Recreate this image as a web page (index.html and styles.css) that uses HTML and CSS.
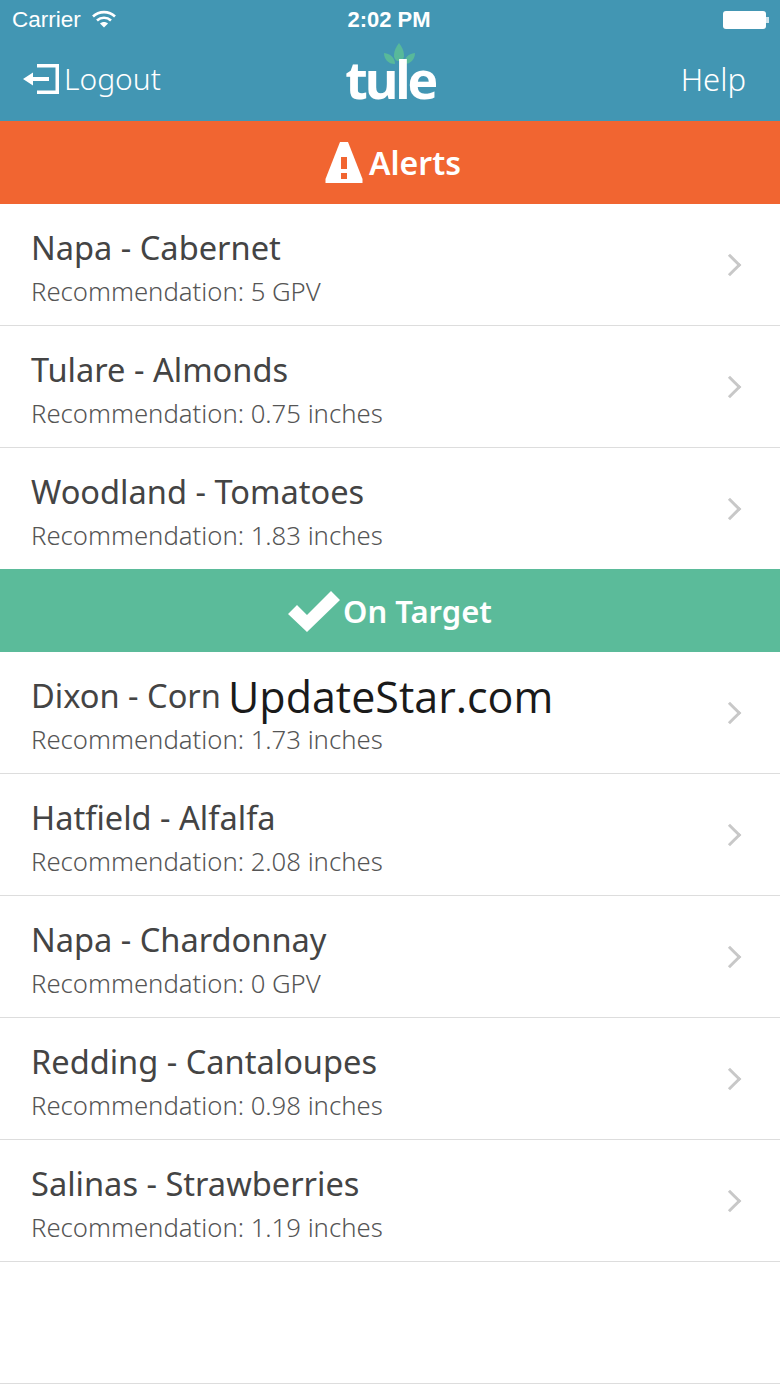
FILE: index.html
```html
<!DOCTYPE html>
<html>

<head>
    <meta charset="UTF-8">
    <title>Tule</title>
    <link rel="stylesheet" href="styles.css">
</head>

<body>
<div class="header">
    <div class="status">
        <div class="carrier">
            <span>Carrier</span>
            <svg class="wifi" width="24" height="18" viewBox="0 0 24 18">
                <path d="M1 6.500C7 0.600 17 0.600 23 6.500" fill="none" stroke="#fff" stroke-width="2.600"/>
                <path d="M5 10.500C9 6.800 15 6.800 19 10.500" fill="none" stroke="#fff" stroke-width="2.600"/>
                <path d="M8 13.600C10.400 11.600 13.600 11.600 16 13.600L12 17.600Z" fill="#fff"/>
            </svg>
        </div>
        <div class="clock">2:02 PM</div>
        <div class="battery"><i></i></div>
    </div>
    <div class="nav">
        <a class="nav-left">
            <svg width="36" height="30" viewBox="0 0 36 30">
                <path d="M14 0H36V30H14V26.500H32.500V3.500H14Z" fill="#fff"/>
                <path d="M0 15L10 8.500V13H26V17H10V21.500Z" fill="#fff"/>
            </svg>
            <span>Logout</span>
        </a>
        <div class="logo">
            <svg class="leaves" width="31" height="22" viewBox="0 0 31 22">
                <path d="M15 0C18 4 20 8 20 12C20 16 18 18 15 18C12 18 10 16 10 12C10 8 12 4 15 0Z" fill="#58b99a"/>
                <path d="M31 10C31 16 27 21 20 21C20 15 24 11 31 10Z" fill="#58b99a"/>
                <path d="M0 10C0 16 4 21 11 21C11 15 7 11 0 10Z" fill="#58b99a"/>
            </svg>
            <span>tule</span>
        </div>
        <a class="nav-right">Help</a>
    </div>
</div>

<div class="band band-alert">
    <svg width="38" height="42" viewBox="0 0 38 42">
        <path d="M15 0H23L37.500 37V41H0.500V37Z" fill="#fff"/>
        <rect x="16" y="15" width="6" height="12" fill="#f16531"/>
        <rect x="16" y="31" width="6" height="6" fill="#f16531"/>
    </svg>
    <span>Alerts</span>
</div>
<ul class="list">
    <li class="row"><div><h3>Napa - Cabernet</h3><p>Recommendation: 5 GPV</p></div><b class="chev"></b></li>
    <li class="row"><div><h3>Tulare - Almonds</h3><p>Recommendation: 0.75 inches</p></div><b class="chev"></b></li>
    <li class="row row-last"><div><h3>Woodland - Tomatoes</h3><p>Recommendation: 1.83 inches</p></div><b class="chev"></b></li>
</ul>

<div class="band band-ok">
    <svg width="52" height="42" viewBox="0 0 52 42">
        <path d="M0 24L9 15L19 25L43 1L52 10L19 42Z" fill="#fff"/>
    </svg>
    <span>On Target</span>
</div>
<ul class="list">
    <li class="row"><div><h3>Dixon - Corn</h3><p>Recommendation: 1.73 inches</p></div><span class="watermark">UpdateStar.com</span><b class="chev"></b></li>
    <li class="row"><div><h3>Hatfield - Alfalfa</h3><p>Recommendation: 2.08 inches</p></div><b class="chev"></b></li>
    <li class="row"><div><h3>Napa - Chardonnay</h3><p>Recommendation: 0 GPV</p></div><b class="chev"></b></li>
    <li class="row"><div><h3>Redding - Cantaloupes</h3><p>Recommendation: 0.98 inches</p></div><b class="chev"></b></li>
    <li class="row"><div><h3>Salinas - Strawberries</h3><p>Recommendation: 1.19 inches</p></div><b class="chev"></b></li>
    <li class="row row-empty"></li>
</ul>
</body>

</html>
```

FILE: styles.css
```css
* {
    padding: 0;
    margin: 0;
    list-style-type: none;
    box-sizing: border-box;
}

body {
    background: #fff;
    font-family: "Noto Sans", sans-serif;
    color: #444;
}

.header {
    height: 121px;
    background: #4296b3;
    color: #fff;
}

.status {
    height: 40px;
    padding: 0 14px 0 12px;
    display: grid;
    grid-template-columns: 1fr auto 1fr;
    align-items: center;
    font-family: "Liberation Sans", sans-serif;
    font-size: 22.500px;
}

.carrier {
    display: flex;
    align-items: center;
    gap: 11px;
}

.wifi {
    margin-top: -3px;
}

.clock {
    font-weight: bold;
    font-size: 22px;
}

.battery {
    justify-self: end;
    width: 43px;
    height: 18px;
    background: #fff;
    border-radius: 3px;
    position: relative;
}

.battery i {
    position: absolute;
    right: -3px;
    top: 6px;
    width: 3px;
    height: 6px;
    background: #cfe4ec;
}

.nav {
    height: 81px;
    padding: 0 34px 4px 23px;
    display: flex;
    align-items: center;
    justify-content: space-between;
    font-size: 30px;
    font-weight: 300;
}

.nav-left {
    display: flex;
    align-items: center;
    gap: 5px;
    width: 211px;
}

.nav-right {
    width: 200px;
    text-align: right;
    font-size: 31px;
}

.logo {
    position: relative;
    font-family: "Open Sans", sans-serif;
    font-size: 52px;
    font-weight: 700;
    letter-spacing: -3.500px;
    line-height: 60px;
}

.logo span {
    position: relative;
}

.leaves {
    position: absolute;
    left: 39px;
    top: -6px;
}

.band {
    height: 83px;
    display: flex;
    align-items: center;
    justify-content: center;
    gap: 3px;
    color: #fff;
    font-size: 31px;
    font-weight: 600;
}

.band-alert {
    background: #f16531;
    padding-left: 6px;
    gap: 6px;
    font-size: 32px;
}

.band-ok {
    background: #5bbb9a;
}

.row {
    height: 122px;
    padding: 0 42px 0 31px;
    border-bottom: 1px solid #ddd;
    display: flex;
    align-items: center;
    justify-content: space-between;
    position: relative;
}

.row-last {
    height: 121px;
    border-bottom: 0;
}

.row > div {
    padding-top: 8px;
}

h3 {
    font-size: 32.600px;
    font-weight: 400;
    line-height: 44px;
    color: #444;
}

.row p {
    padding-top: 1px;
    font-size: 25.700px;
    font-weight: 300;
    line-height: 41px;
    color: #555;
}

.chev {
    width: 16px;
    height: 16px;
    border-top: 3px solid #c8c8c8;
    border-right: 3px solid #c8c8c8;
    transform: rotate(45deg);
}

.watermark {
    position: absolute;
    left: 228px;
    top: 15px;
    font-family: "Open Sans", sans-serif;
    font-size: 43px;
    color: #1a1a1a;
}
```
